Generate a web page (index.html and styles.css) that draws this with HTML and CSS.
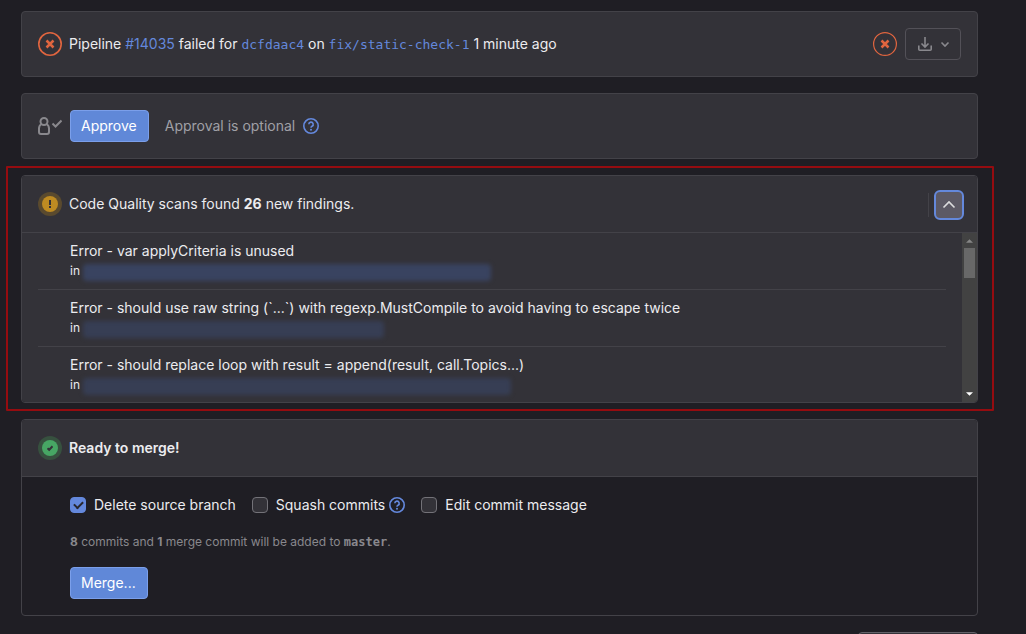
FILE: index.html
```html
<!DOCTYPE html>
<html lang="en">
<head>
<meta charset="utf-8">
<meta name="viewport" content="width=device-width, initial-scale=1">
<title>Merge request</title>
<link rel="stylesheet" href="styles.css">
</head>
<body>
<main class="widgets">
  <section class="card bar">
    <svg class="status failed" viewBox="0 0 24 24" aria-hidden="true"><circle cx="12" cy="12" r="11.2"/><path d="M8.500 8.500l7 7M15.500 8.500l-7 7"/></svg>
    <p class="title">Pipeline <a href="#pipeline">#14035</a> failed for <a class="mono" href="#commit">dcfdaac4</a> on <a class="mono" href="#branch">fix/static-check-1</a> 1 minute ago</p>
    <a class="stage" href="#stage" aria-label="Stage failed"><svg class="status failed thin" viewBox="0 0 24 24" aria-hidden="true"><circle cx="12" cy="12" r="11.4"/><path d="M8.500 8.500l7 7M15.500 8.500l-7 7"/></svg></a>
    <button class="download" type="button" aria-label="Download artifacts">
      <svg class="icon" viewBox="0 0 16 16" aria-hidden="true"><path d="M8 1v10M4.500 7.500L8 11l3.500-3.500M1.800 9.500v3.700a1 1 0 0 0 1 1h10.400a1 1 0 0 0 1-1V9.500"/></svg>
      <svg class="caret" viewBox="0 0 16 16" aria-hidden="true"><path d="M4.500 6.500L8 10l3.500-3.500"/></svg>
    </button>
  </section>

  <section class="card bar">
    <svg class="approver" viewBox="0 0 24 24" aria-hidden="true"><circle cx="6" cy="7.500" r="3.500"/><path d="M3.500 10C1.800 11 1 12.500 1 14.500v3.500a2 2 0 0 0 2 2h6a2 2 0 0 0 2-2v-3.500c0-2-.8-3.500-2.500-4.500M14.500 9.500l3 3 6-6"/></svg>
    <button class="primary" type="button">Approve</button>
    <p class="optional">Approval is optional</p>
    <a class="help" href="#approval-help" aria-label="About approvals"><svg viewBox="0 0 16 16" aria-hidden="true"><circle cx="8" cy="8" r="7.200"/><path d="M5.800 6.300a2.200 2.200 0 1 1 3.200 2c-.7.400-1 .8-1 1.400"/><circle class="dot" cx="8" cy="11.800" r="1"/></svg></a>
  </section>

  <div class="marked">
    <section class="card">
      <header class="bar heading">
        <svg class="status warning" viewBox="0 0 24 24" aria-hidden="true"><circle class="halo" cx="12" cy="12" r="12"/><circle class="disc" cx="12" cy="12" r="8"/><path class="mark" d="M11 8h2v5h-2zM11 14h2v2h-2z"/></svg>
        <p class="title">Code Quality scans found <strong>26</strong> new findings.</p>
        <div class="toggle-wrap">
          <button class="toggle" type="button" aria-label="Collapse" aria-expanded="true"><svg viewBox="0 0 16 16" aria-hidden="true"><path d="M2.500 10.500L8 5l5.500 5.500"/></svg></button>
        </div>
      </header>
      <div class="scroller">
        <ul class="findings">
          <li><p>Error - var applyCriteria is unused</p><div class="file">in <span class="redacted long"></span></div></li>
          <li><p>Error - should use raw string (`...`) with regexp.MustCompile to avoid having to escape twice</p><div class="file">in <span class="redacted short"></span></div></li>
          <li><p>Error - should replace loop with result = append(result, call.Topics...)</p><div class="file">in <span class="redacted longest"></span></div></li>
        </ul>
        <div class="scrollbar" aria-hidden="true">
          <svg class="arrow up" viewBox="0 0 8 4"><path d="M4 0l4 4H0z"/></svg>
          <span class="thumb"></span>
          <svg class="arrow down" viewBox="0 0 8 4"><path d="M0 0h8L4 4z"/></svg>
        </div>
      </div>
    </section>
    <div class="outline"></div>
  </div>

  <section class="card">
    <header class="bar heading">
      <svg class="status success" viewBox="0 0 24 24" aria-hidden="true"><circle class="halo" cx="12" cy="12" r="12"/><circle class="disc" cx="12" cy="12" r="8"/><path class="tick" d="M9.500 12.200l1.700 1.600 3.300-3.500"/></svg>
      <h2 class="title">Ready to merge!</h2>
    </header>
    <form class="merge">
      <div class="options">
        <label class="option"><input type="checkbox" checked>Delete source branch</label>
        <div class="with-help">
          <label class="option"><input type="checkbox">Squash commits</label>
          <a class="help" href="#squash-help" aria-label="About squashing"><svg viewBox="0 0 16 16" aria-hidden="true"><circle cx="8" cy="8" r="7.200"/><path d="M5.800 6.300a2.200 2.200 0 1 1 3.200 2c-.7.400-1 .8-1 1.400"/><circle class="dot" cx="8" cy="11.800" r="1"/></svg></a>
        </div>
        <label class="option"><input type="checkbox">Edit commit message</label>
      </div>
      <p class="summary"><strong>8</strong> commits and <strong>1</strong> merge commit will be added to <strong class="branch">master</strong>.</p>
      <button class="primary" type="button">Merge...</button>
    </form>
  </section>
  <div class="sorting"><button class="sort" type="button" aria-label="Sort or filter"></button></div>
</main>
</body>
</html>
```
FILE: styles.css
```css
* { box-sizing: border-box; }

body {
  margin: 0;
  height: 100vh;
  overflow: hidden;
  background: #1f1e24;
  color: #ececef;
  font: 14px/20px Inter, "Noto Sans", sans-serif;
}

p, h2, ul { margin: 0; padding: 0; }
h2 { font-size: 14px; font-weight: 600; }
strong { font-weight: 700; }
a { color: #6488dc; text-decoration: none; }
button { font: inherit; cursor: pointer; }

.widgets {
  display: flex;
  flex-direction: column;
  gap: 16px;
  padding: 11px 48px 0 21px;
}

.card {
  border: 1px solid #434248;
  border-radius: 4px;
  overflow: hidden;
}

.bar {
  display: flex;
  align-items: center;
  padding: 16px;
  background: #333238;
}

.heading {
  height: 57px;
  padding: 0 13px 0 16px;
  border-bottom: 1px solid #434248;
}

.title { flex: 1; margin-left: 7px; }
.mono { font: 13px/20px "DejaVu Sans Mono", monospace; }

.status { width: 24px; height: 24px; flex: none; fill: none; }
.failed { stroke: #e0653f; stroke-width: 2; }
.failed circle { stroke-width: 1.6; }
.failed.thin circle { stroke-width: 1.2; }
.failed path { stroke-width: 2.5; }
.stage { display: flex; margin-right: 8px; }

.warning .halo { fill: #5a4a2e; }
.warning .disc { fill: #be8b22; }
.warning .mark { fill: #333238; }
.success .halo { fill: #37513f; }
.success .disc { fill: #47a664; }
.success .tick { stroke: #333238; stroke-width: 2; }

.download {
  display: flex;
  align-items: center;
  gap: 4px;
  height: 32px;
  padding: 0 7px 0 11px;
  border: 1px solid #535158;
  border-radius: 4px;
  background: none;
}
.download svg { width: 16px; height: 16px; fill: none; stroke: #89888d; stroke-width: 1.6; }

.approver { width: 24px; height: 24px; margin-right: 8px; fill: none; stroke: #89888d; stroke-width: 2; }

.primary {
  height: 32px;
  padding: 0 11px 0 10px;
  border: 1px solid #7b9fea;
  border-radius: 4px;
  background: #6088d8;
  color: #fff;
}

.optional { margin: 0 8px 0 16px; color: #a0a0a6; }

.help, .help svg { display: block; width: 16px; height: 16px; }
.help svg { fill: none; stroke: #6488dc; stroke-width: 1.6; }
.help .dot { fill: #6488dc; stroke: none; }

.marked { position: relative; }
.outline {
  position: absolute;
  inset: -9px -16px -8px -15px;
  border: 2px solid #950c10;
  border-radius: 1px;
  pointer-events: none;
}

.toggle-wrap { margin-top: 2px; padding-left: 5px; border-left: 1px solid #434248; height: 24px; display: flex; align-items: center; }
.toggle {
  display: flex;
  width: 30px;
  height: 30px;
  padding: 5px;
  border: 2px solid #6488dc;
  border-radius: 6px;
  background: #5c5965;
}
.toggle svg { width: 16px; height: 16px; fill: none; stroke: #dcdcde; stroke-width: 1.6; }

.scroller { display: flex; background: #333238; }
.findings { flex: 1; padding: 0 16px; list-style: none; }
.findings li { padding: 8px 0 8px 32px; border-bottom: 1px solid #434248; }
.findings li:last-child { padding-bottom: 7px; border-bottom: 0; }
.file { display: flex; align-items: center; font-size: 12px; line-height: 20px; height: 20px; }

.redacted {
  height: 17px;
  margin: 3px 0 0 3px;
  border-radius: 4px;
  background: #394360;
  filter: blur(2px);
}
.long { width: 408px; }
.short { width: 301px; background: #373e54; }
.longest { width: 428px; background: #373e54; }

.scrollbar {
  display: flex;
  flex-direction: column;
  align-items: center;
  width: 15px;
  padding: 6px 0;
  background: #424242;
}
.arrow { width: 7px; height: 4px; }
.up { fill: #868686; margin-bottom: 5px; }
.down { fill: #fff; margin-top: auto; }
.thumb { width: 11px; height: 30px; background: #686868; }

.merge { padding: 16px 16px 16px 48px; }
.options { display: flex; gap: 16px; padding: 2px 0; }
.option { display: flex; align-items: center; gap: 8px; }
.with-help { display: flex; align-items: center; gap: 4px; }

.option input {
  appearance: none;
  display: grid;
  place-items: center;
  width: 16px;
  height: 16px;
  margin: 0;
  border: 1px solid #737278;
  border-radius: 4px;
  background: #333238;
}
.option input:checked { border-color: #6488dc; background: #6488dc; }
.option input:checked::after {
  content: "";
  width: 7px;
  height: 4px;
  margin-bottom: 3px;
  border: solid #28272d;
  border-width: 0 0 2px 2px;
  transform: rotate(-45deg);
}

.summary { margin: 16px 0; color: #89888d; font-size: 12px; line-height: 18px; }
.branch { font: bold 12px/1 "DejaVu Sans Mono", monospace; }

.sorting { display: flex; justify-content: flex-end; }
.sort { width: 120px; height: 32px; border: 1px solid #626168; border-radius: 4px; background: #333238; }
```
